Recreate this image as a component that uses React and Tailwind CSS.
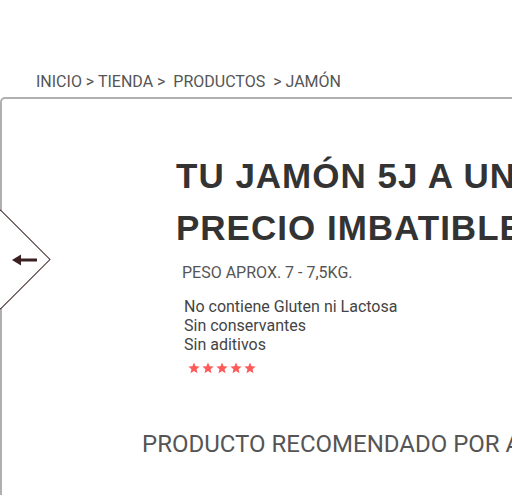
import React from "react";

const Stars = () => (
  <div className="flex gap-[2px] pl-[186px] mt-[8px]">
    {[0, 1, 2, 3, 4].map((i) => (
      <svg key={i} width="12" height="12" viewBox="0 0 24 24">
        <path
          d="M12 1l3.2 7.4 8 .7-6.1 5.3 1.9 7.9L12 18.1l-7 4.2 1.9-7.9L.8 9.1l8-.7z"
          fill="#ff5a5a"
        />
      </svg>
    ))}
  </div>
);

const PrevArrow = () => (
  <>
    <div className="absolute left-[-37px] top-[125px] w-[71px] h-[71px] rotate-45 border border-[#4a3535] bg-white" />
    <svg
      className="absolute left-[9px] top-[154px]"
      width="28"
      height="14"
      viewBox="0 0 28 14"
    >
      <path d="M4 7h22" stroke="#3a2020" strokeWidth="3" />
      <path d="M1 7l9-5.5v11z" fill="#3a2020" />
    </svg>
  </>
);

export default function App() {
  return (
    <div className="w-[512px] h-[495px] overflow-hidden bg-white font-['Roboto',sans-serif]">
      <nav className="pt-[72px] pl-[36px] text-[16px] leading-[19px] text-[#555] whitespace-pre">
        INICIO &gt; TIENDA &gt;  PRODUCTOS  &gt; JAMÓN
      </nav>
      <section className="relative mt-[6px] w-[640px] min-h-[420px] border-2 border-[#b0b0b0] rounded-tl-[5px]">
        <PrevArrow />
        <div className="pt-[51px]">
          <h1 className="pl-[174px] font-['Liberation_Sans',sans-serif] font-bold text-[35px] leading-[52px] tracking-[1px] text-[#333] whitespace-nowrap">
            TU JAMÓN 5J A UN
            <br />
            PRECIO IMBATIBLE
          </h1>
          <p className="pl-[180px] mt-[9px] text-[16px] leading-[19px] text-[#555]">
            PESO APROX. 7 - 7,5KG.
          </p>
          <ul className="pl-[182px] mt-[15px] text-[16px] leading-[19px] text-[#444]">
            <li>No contiene Gluten ni Lactosa</li>
            <li>Sin conservantes</li>
            <li>Sin aditivos</li>
          </ul>
          <Stars />
          <h2 className="pl-[140px] mt-[56px] text-[24px] leading-[28px] text-[#555] whitespace-nowrap">
            PRODUCTO RECOMENDADO POR ALIMENTARIA
          </h2>
        </div>
      </section>
    </div>
  );
}
